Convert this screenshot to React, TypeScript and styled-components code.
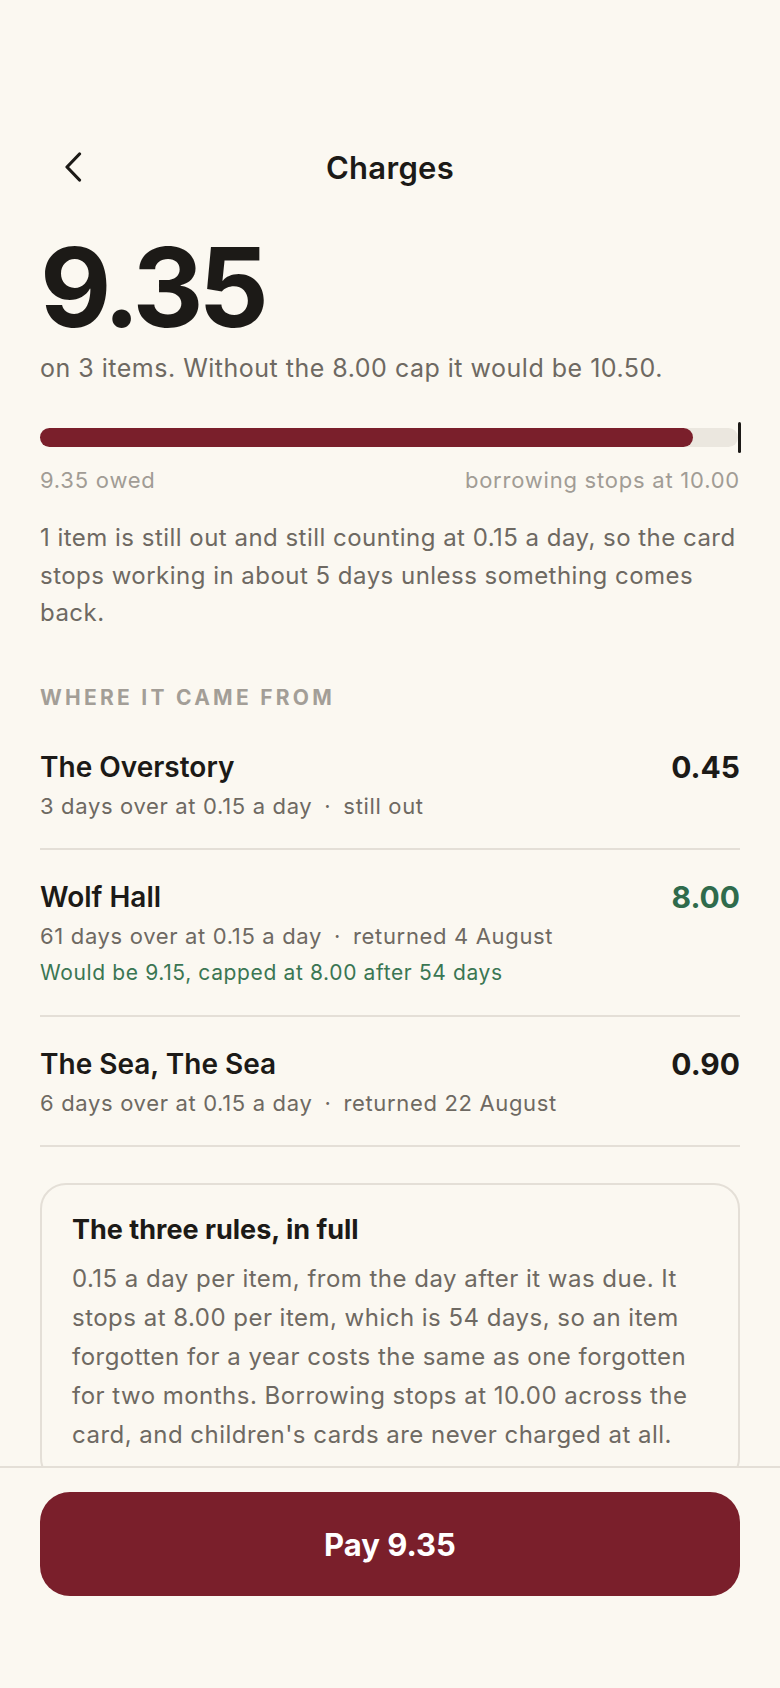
import styled, { createGlobalStyle } from 'styled-components'

const GlobalStyle = createGlobalStyle`
  html, body {
    margin: 0;
    padding: 0;
    background: #fbf8f1;
  }
  body {
    font-family: Inter, "Noto Sans", sans-serif;
    color: #1c1a17;
    -webkit-font-smoothing: antialiased;
  }
  * { box-sizing: border-box; }
`

type Charge = {
  title: string
  amount: string
  days: number
  status: string
  note?: string
  capped?: boolean
}

const charges: Charge[] = [
  { title: 'The Overstory', amount: '0.45', days: 3, status: 'still out' },
  {
    title: 'Wolf Hall',
    amount: '8.00',
    days: 61,
    status: 'returned 4 August',
    note: 'Would be 9.15, capped at 8.00 after 54 days',
    capped: true,
  },
  { title: 'The Sea, The Sea', amount: '0.90', days: 6, status: 'returned 22 August' },
]

const owed = 9.35
const limit = 10

const Screen = styled.div`
  height: 100vh;
  display: flex;
  flex-direction: column;
  overflow: hidden;
`

const Content = styled.main`
  flex: 1;
  min-height: 0;
  overflow: hidden;
  padding: 137px 40px 0;
`

const Header = styled.header`
  display: grid;
  grid-template-columns: 60px 1fr 60px;
  align-items: center;
  height: 60px;
`

const BackButton = styled.button`
  border: 0;
  background: none;
  padding: 0 0 0 24px;
  height: 60px;
  display: flex;
  align-items: center;
  color: #1c1a17;
  cursor: pointer;
`

const Title = styled.h1`
  margin: 0;
  text-align: center;
  font-size: 31px;
  font-weight: 600;
  letter-spacing: 0.01em;
`

const Total = styled.div`
  margin-top: 35px;
  font-size: 110px;
  line-height: 110px;
  font-weight: 700;
  letter-spacing: -0.045em;
`

const Lead = styled.p`
  margin: 10px 0 0;
  font-size: 25px;
  line-height: 32px;
  letter-spacing: 0.02em;
  color: #6e6962;
`

const Track = styled.div`
  position: relative;
  margin-top: 44px;
  height: 19px;
  border-radius: 10px;
  background: #ebe7df;
  margin-right: 2px;
`

const Fill = styled.div`
  height: 100%;
  border-radius: 10px;
  background: #7a1f2b;
`

const Limit = styled.div`
  position: absolute;
  right: -3px;
  top: -6px;
  width: 3px;
  height: 31px;
  border-radius: 2px;
  background: #1c1a17;
`

const BarLabels = styled.div`
  display: flex;
  justify-content: space-between;
  margin-top: 19px;
  font-size: 22px;
  line-height: 28px;
  letter-spacing: 0.035em;
  color: #a19c95;
`

const Body = styled.p`
  margin: 25px 0 0;
  font-size: 24px;
  line-height: 37.5px;
  letter-spacing: 0.02em;
  color: #6e6962;
`

const SectionLabel = styled.h2`
  margin: 54px 0 10px;
  font-size: 21px;
  line-height: 24px;
  font-weight: 700;
  letter-spacing: 0.155em;
  text-transform: uppercase;
  color: #a39e97;
`

const Row = styled.div`
  display: grid;
  grid-template-columns: 1fr auto;
  column-gap: 16px;
  padding: 30px 0 28px;
  border-bottom: 2px solid #e4dfd7;
`

const RowText = styled.div`
  display: flex;
  flex-direction: column;
  gap: 8px;
`

const RowTitle = styled.div`
  font-size: 28px;
  line-height: 34px;
  font-weight: 600;
`

const Amount = styled.div<{ $capped?: boolean }>`
  font-size: 30px;
  line-height: 34px;
  font-weight: 700;
  color: ${p => (p.$capped ? '#2f6b4c' : '#1c1a17')};
`

const Meta = styled.div`
  font-size: 22px;
  line-height: 28px;
  letter-spacing: 0.03em;
  color: #6e6962;
`

const Dot = styled.span`
  padding: 0 12px;
`

const Note = styled.div`
  margin-top: 1px;
  font-size: 21px;
  line-height: 28px;
  letter-spacing: 0.03em;
  color: #3a7653;
`

const RulesCard = styled.section`
  margin-top: 36px;
  border: 2px solid #e4dfd7;
  border-radius: 26px;
  padding: 29px 30px 28px;
`

const RulesTitle = styled.h3`
  margin: 0;
  font-size: 27px;
  line-height: 32px;
  font-weight: 700;
`

const RulesText = styled.p`
  margin: 13px 0 0;
  font-size: 24px;
  line-height: 39px;
  letter-spacing: 0.02em;
  color: #6e6962;
`

const Footer = styled.footer`
  flex-shrink: 0;
  border-top: 2px solid #e4dfd7;
  background: #fbf8f1;
  padding: 24px 40px 92px;
`

const PayButton = styled.button`
  width: 100%;
  height: 104px;
  border: 0;
  border-radius: 30px;
  background: #7a1f2b;
  color: #fff;
  font-family: inherit;
  font-size: 31px;
  font-weight: 700;
  cursor: pointer;
`

function ChevronLeft() {
  return (
    <svg width="18" height="30" viewBox="0 0 18 30" fill="none">
      <path d="M15.5 2 L3 15 L15.5 28" stroke="currentColor" strokeWidth="3.2" strokeLinecap="round" strokeLinejoin="round" />
    </svg>
  )
}

export default function App() {
  const pct = (owed / limit) * 100

  return (
    <>
      <GlobalStyle />
      <Screen>
        <Content>
          <Header>
            <BackButton aria-label="Back"><ChevronLeft /></BackButton>
            <Title>Charges</Title>
            <span />
          </Header>

          <Total>9.35</Total>
          <Lead>on 3 items. Without the 8.00 cap it would be 10.50.</Lead>

          <Track>
            <Fill style={{ width: `${pct}%` }} />
            <Limit />
          </Track>
          <BarLabels>
            <span>9.35 owed</span>
            <span>borrowing stops at 10.00</span>
          </BarLabels>

          <Body>
            1 item is still out and still counting at 0.15 a day, so the card stops working in about 5 days unless something comes back.
          </Body>

          <SectionLabel>Where it came from</SectionLabel>
          {charges.map(c => (
            <Row key={c.title}>
              <RowText>
                <RowTitle>{c.title}</RowTitle>
                <Meta>
                  {c.days} days over at 0.15 a day<Dot>·</Dot>{c.status}
                </Meta>
                {c.note && <Note>{c.note}</Note>}
              </RowText>
              <Amount $capped={c.capped}>{c.amount}</Amount>
            </Row>
          ))}

          <RulesCard>
            <RulesTitle>The three rules, in full</RulesTitle>
            <RulesText>
              0.15 a day per item, from the day after it was due. It stops at 8.00 per item, which is 54 days, so an item forgotten for a year costs the same as one forgotten for two months. Borrowing stops at 10.00 across the card, and children's cards are never charged at all.
            </RulesText>
          </RulesCard>
        </Content>

        <Footer>
          <PayButton>Pay 9.35</PayButton>
        </Footer>
      </Screen>
    </>
  )
}
